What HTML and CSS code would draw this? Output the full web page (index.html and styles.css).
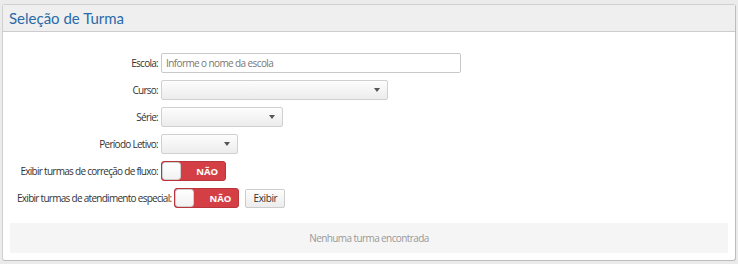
FILE: index.html
```html
<!DOCTYPE html>
<html lang="pt">
<head>
<meta charset="utf-8">
<link rel="stylesheet" href="styles.css">
</head>
<body>
<div class="panel">
  <div class="panel-header"><h2 class="panel-title">Seleção de Turma</h2></div>
  <div class="panel-body">
    <form class="form">
      <div class="row">
        <label class="lbl">Escola:</label>
        <input class="text-input" type="text" placeholder="Informe o nome da escola">
      </div>
      <div class="row">
        <label class="lbl">Curso:</label>
        <div class="select sel-curso"><span class="caret"></span></div>
      </div>
      <div class="row">
        <label class="lbl">Série:</label>
        <div class="select sel-serie"><span class="caret"></span></div>
      </div>
      <div class="row">
        <label class="lbl">Período Letivo:</label>
        <div class="select sel-periodo"><span class="caret"></span></div>
      </div>
      <div class="row">
        <label class="lbl">Exibir turmas de correção de fluxo:</label>
        <div class="toggle"><span class="knob"></span><span class="toggle-text">NÃO</span></div>
      </div>
      <div class="row">
        <label class="lbl">Exibir turmas de atendimento especial:</label>
        <div class="toggle"><span class="knob"></span><span class="toggle-text">NÃO</span></div>
        <button class="btn" type="button">Exibir</button>
      </div>
    </form>
    <div class="empty">Nenhuma turma encontrada</div>
  </div>
</div>
</body>
</html>
```
FILE: styles.css
```css
* { box-sizing: border-box; }
html, body { margin: 0; padding: 0; }
body {
  background: #ebebeb;
  font-family: "Open Sans", "Noto Sans", sans-serif;
  color: #333;
  padding: 4px 2px 3px 2px;
}
.panel {
  background: #fff;
  border: 1px solid #cfcfcf;
  border-right-color: #bdbdbd;
  border-bottom-color: #bdbdbd;
  border-radius: 3px;
  height: 257px;
}
.panel-header {
  background: #efefef;
  border-bottom: 1px solid #cccccc;
  height: 27px;
  padding: 0 6px;
  display: flex;
  align-items: center;
}
.panel-title {
  margin: 0;
  font-family: "Lato", "Open Sans", sans-serif;
  font-weight: normal;
  font-size: 15px;
  color: #2a6aa8;
}
.panel-body {
  padding: 21px 6px 0 6px;
}
.form {
  display: flex;
  flex-direction: column;
  gap: 7px;
  padding-left: 8px;
}
.row {
  display: flex;
  align-items: center;
  height: 20px;
}
.lbl {
  min-width: 141px;
  text-align: right;
  font-size: 10px;
  letter-spacing: -0.72px;
  margin-right: 3px;
  white-space: nowrap;
}
.text-input {
  width: 300px;
  height: 20px;
  border: 1px solid #c9c9c9;
  border-radius: 2px;
  font-family: inherit;
  font-size: 10px;
  letter-spacing: -0.6px;
  padding: 0 4px;
  color: #333;
}
.text-input::placeholder { color: #777; }
.select {
  height: 20px;
  border: 1px solid #d0d0d0;
  border-radius: 2px;
  background: linear-gradient(#fdfdfd, #ececec);
  position: relative;
}
.sel-curso { width: 227px; }
.sel-serie { width: 122px; }
.sel-periodo { width: 77px; }
.caret {
  position: absolute;
  right: 7px;
  top: 7px;
  width: 0; height: 0;
  border-left: 3.5px solid transparent;
  border-right: 3.5px solid transparent;
  border-top: 4px solid #555;
}
.toggle {
  width: 65px;
  height: 20px;
  background: #d43f46;
  border: 1px solid #b9353b;
  border-radius: 3px;
  position: relative;
  display: flex;
  align-items: center;
  justify-content: flex-end;
  padding-right: 7px;
}
.knob {
  position: absolute;
  left: 0; top: 0;
  width: 19px; height: 18px;
  background: linear-gradient(#ffffff, #f2f2f2);
  border: 1px solid #cfcfcf;
  border-radius: 3px;
}
.toggle-text {
  color: #fff;
  font-weight: bold;
  font-size: 9.5px;
}
.btn {
  margin-left: 6px;
  height: 19px;
  width: 40px;
  border: 1px solid #cccccc;
  border-radius: 2px;
  background: linear-gradient(#fdfdfd, #ececec);
  font-family: inherit;
  font-size: 10px;
  letter-spacing: -0.4px;
  color: #333;
  padding: 0;
}
.empty {
  margin-top: 15px;
  background: #f5f5f5;
  height: 30px;
  display: flex;
  align-items: center;
  justify-content: center;
  font-size: 10px;
  letter-spacing: -0.6px;
  color: #999;
  margin-left: 1px;
  margin-right: 1px;
}
```
